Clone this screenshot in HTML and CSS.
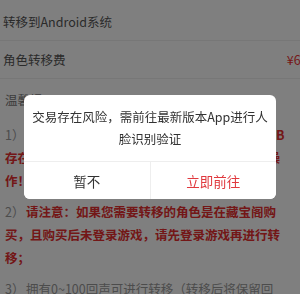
FILE: index.html
```html
<!DOCTYPE html>
<html lang="zh-CN">
<head>
    <meta charset="UTF-8">
    <meta name="viewport" content="width=device-width, initial-scale=1.0">
    <title>角色转移</title>
    <link rel="stylesheet" href="styles.css">
</head>
<body>
    <div class="page">
        <div class="row">
            <span class="row-label">转移到Android系统</span>
        </div>
        <div class="row">
            <span class="row-label">角色转移费</span>
            <span class="price">¥6.00</span>
        </div>

        <div class="notice">
            <div class="notice-title">温馨提示</div>
            <p class="notice-item"><span class="num">1）</span><strong class="warn">转移前请仔细确认角色状态，若角色风险级为B存在异常风险的角色无法转移，请谨慎进行转移操作！</strong></p>
            <p class="notice-item"><span class="num">2）</span><strong class="warn">请注意：如果您需要转移的角色是在藏宝阁购买，且购买后未登录游戏，请先登录游戏再进行转移；</strong></p>
            <p class="notice-item"><span class="num">3）</span>拥有0~100回声可进行转移（转移后将保留回声）；</p>
        </div>
    </div>

    <!-- Risk Dialog -->
    <div class="dialog-mask">
        <div class="dialog">
            <div class="dialog-msg">交易存在风险，需前往最新版本App进行人脸识别验证</div>
            <div class="dialog-buttons">
                <button class="dialog-btn">暂不</button>
                <button class="dialog-btn dialog-btn-primary">立即前往</button>
            </div>
        </div>
    </div>
</body>
</html>
```

FILE: styles.css
```css
body {
    font-family: "Noto Sans CJK SC", "Noto Sans", sans-serif;
    background: white;
    margin: 0;
    overflow: hidden;
    font-size: 12.5px;
}

.page {
    padding-top: 3px;
}

.row {
    display: flex;
    justify-content: space-between;
    align-items: center;
    height: 37px;
    padding: 0 12px 0 3px;
    margin-right: -30px;
    border-bottom: 1px solid #eee;
    color: #555;
}

.price {
    color: #e33;
}

.notice {
    padding: 0 10px 0 5px;
    line-height: 23px;
}

.notice-title {
    margin-top: 9px;
    margin-bottom: 12px;
    color: #777;
}

.notice-item {
    margin: 0 0 8px;
    color: #999;
}

.num {
    display: inline-block;
    width: 21px;
}

.warn {
    color: #e62e2e;
    font-weight: bold;
}

/* Risk Dialog */
.dialog-mask {
    position: fixed;
    top: 0;
    left: 0;
    right: 0;
    bottom: 0;
    background: rgba(0, 0, 0, 0.5);
    display: flex;
    justify-content: center;
    align-items: center;
}

.dialog {
    background: white;
    width: 252px;
    border-radius: 6px;
    overflow: hidden;
}

.dialog-msg {
    padding: 11px 6px;
    line-height: 22px;
    text-align: center;
    color: #333;
}

.dialog-buttons {
    display: flex;
    border-top: 1px solid #eee;
}

.dialog-btn {
    flex: 1;
    height: 37px;
    border: none;
    background: white;
    font-family: inherit;
    font-size: 13.5px;
    color: #333;
    padding: 0;
}

.dialog-btn + .dialog-btn {
    border-left: 1px solid #eee;
}

.dialog-btn-primary {
    color: #e0393e;
}
```
